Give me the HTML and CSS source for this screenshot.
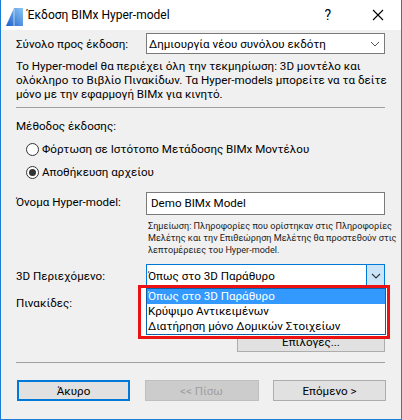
FILE: index.html
```html
<!DOCTYPE html>
<html lang="el">
<head>
    <meta charset="UTF-8">
    <title>Έκδοση BIMx Hyper-model</title>
    <link rel="stylesheet" href="styles.css">
</head>
<body>
    <div class="window">
        <div class="titlebar">
            <svg class="app-icon" width="20" height="20" viewBox="0 0 20 20">
                <defs>
                    <linearGradient id="sail" x1="0" y1="1" x2="1" y2="0">
                        <stop offset="0" stop-color="#1e5fc8"/>
                        <stop offset="1" stop-color="#8cc8f4"/>
                    </linearGradient>
                </defs>
                <path d="M1 19 L9 1 L18 1 L18 19 Z" fill="url(#sail)"/>
                <path d="M9 2 L9 19" stroke="#ffffff" stroke-width="1" opacity="0.6"/>
            </svg>
            <span class="title">Έκδοση BIMx Hyper-model</span>
            <span class="help">?</span>
            <svg class="close" width="12" height="12" viewBox="0 0 12 12">
                <path d="M1 1 L11 11 M11 1 L1 11" stroke="#000" stroke-width="1.1"/>
            </svg>
        </div>

        <div class="content">
            <div class="field">
                <span class="field-label">Σύνολο προς έκδοση:</span>
                <div class="select">
                    <span class="select-value">Δημιουργία νέου συνόλου εκδότη</span>
                    <svg class="chevron" width="10" height="6" viewBox="0 0 10 6">
                        <path d="M1 1 L5 5 L9 1" fill="none" stroke="#555" stroke-width="1"/>
                    </svg>
                </div>
            </div>

            <p class="desc">Το Hyper-model θα περιέχει όλη την τεκμηρίωση: 3D μοντέλο και<br>ολόκληρο το Βιβλίο Πινακίδων. Τα Hyper-models μπορείτε να τα δείτε<br>μόνο με την εφαρμογή BIMx για κινητό.</p>

            <hr class="sep sep-top">

            <div class="group-label">Μέθοδος έκδοσης:</div>
            <div class="radio radio-first"><span class="radio-dot"></span>Φόρτωση σε Ιστότοπο Μετάδοσης BIMx Μοντέλου</div>
            <div class="radio checked"><span class="radio-dot"></span>Αποθήκευση αρχείου</div>

            <div class="field field-name">
                <span class="field-label">Όνομα Hyper-model:</span>
                <div class="textbox">Demo BIMx Model</div>
            </div>

            <p class="note">Σημείωση: Πληροφορίες που ορίστηκαν στις Πληροφορίες<br>Μελέτης και την Επιθεώρηση Μελέτης θα προστεθούν στις<br>λεπτομέρειες του Hyper-model.</p>

            <div class="field field-3d">
                <span class="field-label">3D Περιεχόμενο:</span>
                <div class="select select-open">
                    <span class="select-value">Όπως στο 3D Παράθυρο</span>
                    <span class="select-button">
                        <svg class="chevron" width="10" height="6" viewBox="0 0 10 6">
                            <path d="M1 1 L5 5 L9 1" fill="none" stroke="#333" stroke-width="1.1"/>
                        </svg>
                    </span>
                    <div class="highlight-frame">
                        <ul class="dropdown">
                            <li class="selected">Όπως στο 3D Παράθυρο</li>
                            <li>Κρύψιμο Αντικειμένων</li>
                            <li>Διατήρηση μόνο Δομικών Στοιχείων</li>
                        </ul>
                    </div>
                </div>
            </div>

            <div class="field field-sheets">
                <span class="field-label">Πινακίδες:</span>
                <button class="btn btn-options">Επιλογές...</button>
            </div>

            <hr class="sep sep-bottom">

            <div class="buttons">
                <button class="btn btn-default">Άκυρο</button>
                <button class="btn btn-disabled">&lt;&lt; Πίσω</button>
                <button class="btn">Επόμενο &gt;</button>
            </div>
        </div>
    </div>
</body>
</html>
```

FILE: styles.css
```css
body {
    margin: 0;
    padding: 0;
    font-family: Roboto, "Noto Sans", sans-serif;
    font-size: 11.6px;
    line-height: 16px;
    color: #000;
    background-color: #f0f0f0;
}

.window {
    width: 402px;
    height: 420px;
    box-sizing: border-box;
    border: 1px solid #1a7fd4;
    border-top: none;
    background-color: #f0f0f0;
    overflow: hidden;
}

.titlebar {
    height: 30px;
    background-color: #fff;
    display: flex;
    align-items: center;
    margin: 0 -1px;
    padding-left: 5px;
}

.app-icon {
    margin-top: 4px;
}

.title {
    margin-left: 2px;
    font-size: 12px;
    flex: 1;
}

.help {
    font-size: 14px;
    margin-right: 41px;
}

.close {
    margin-right: 18px;
}

.content {
    padding: 0 16px 0 15px;
}

.field {
    display: flex;
    align-items: center;
}

.field-label {
    width: 130px;
    flex-shrink: 0;
    white-space: nowrap;
}

.select {
    position: relative;
    flex: 1;
    height: 21px;
    box-sizing: border-box;
    border: 1px solid #7a7a7a;
    background-color: #fff;
    display: flex;
    align-items: center;
    padding-left: 2px;
}

.field:first-child {
    margin-top: 3px;
}

.select-value {
    flex: 1;
    white-space: nowrap;
}

.chevron {
    margin-right: 4px;
}

.desc {
    margin: 5px 0 0 0;
    line-height: 14px;
    white-space: nowrap;
}

.sep {
    border: none;
    border-top: 1px solid #a0a0a0;
    margin: 0;
    height: 0;
}

.sep-top {
    margin-top: 6px;
}

.group-label {
    margin-top: 10px;
}

.radio {
    display: flex;
    align-items: center;
    margin-top: 7px;
    padding-left: 10px;
    white-space: nowrap;
}

.radio-dot {
    width: 11px;
    height: 11px;
    border: 1px solid #333;
    border-radius: 50%;
    background-color: #fff;
    margin-right: 3px;
    position: relative;
}

.checked .radio-dot::after {
    content: "";
    position: absolute;
    left: 2px;
    top: 2px;
    width: 7px;
    height: 7px;
    border-radius: 50%;
    background-color: #333;
}

.field-name {
    margin-top: 12px;
    align-items: flex-start;
}

.field-name .field-label {
    padding-top: 2px;
}

.textbox {
    flex: 1;
    height: 23px;
    box-sizing: border-box;
    border: 1px solid #7a7a7a;
    background-color: #fff;
    padding-left: 4px;
    line-height: 21px;
}

.note {
    margin: 5px 0 0 132px;
    font-size: 9.1px;
    line-height: 12px;
    color: #222;
    white-space: nowrap;
}

.field-3d {
    margin-top: 8px;
}

.select-open {
    height: 23px;
    border-color: #0078d7;
    padding-left: 1px;
}

.select-button {
    width: 17px;
    height: 21px;
    background-color: #cce4f7;
    border-left: 1px solid #0078d7;
    display: flex;
    align-items: center;
    justify-content: center;
}

.select-button .chevron {
    margin: 0;
}

.highlight-frame {
    position: absolute;
    top: 20px;
    left: -9px;
    right: -6px;
    border: 3px solid #ee1111;
    background-color: #fff;
    padding: 0 0 1px 5px;
    z-index: 2;
}

.dropdown {
    list-style: none;
    margin: 0 1px 0 0;
    padding: 0;
    border: 1px solid #0e5fa8;
    background-color: #fff;
}

.dropdown li {
    height: 15px;
    line-height: 15px;
    padding-left: 1px;
    white-space: nowrap;
}

.dropdown .selected {
    background-color: #3399ff;
    color: #fff;
}

.field-sheets {
    margin-top: 8px;
    align-items: flex-start;
}

.btn {
    font-family: Roboto, "Noto Sans", sans-serif;
    font-size: 11.6px;
    color: #000;
    background-color: #e1e1e1;
    border: 1px solid #adadad;
    height: 21px;
    padding: 0;
}

.btn-options {
    margin-left: auto;
    margin-top: 36px;
    width: 148px;
}

.sep-bottom {
    margin-top: 10px;
}

.buttons {
    display: flex;
    justify-content: space-between;
    margin-top: 17px;
    padding-left: 1px;
    margin-right: -1px;
}

.buttons .btn {
    width: 113px;
}

.buttons .btn-disabled {
    width: 114px;
    background-color: #cccccc;
    border-color: #bfbfbf;
    color: #a0a0a0;
}

.buttons .btn-default {
    border: 2px solid #0078d7;
}
```
